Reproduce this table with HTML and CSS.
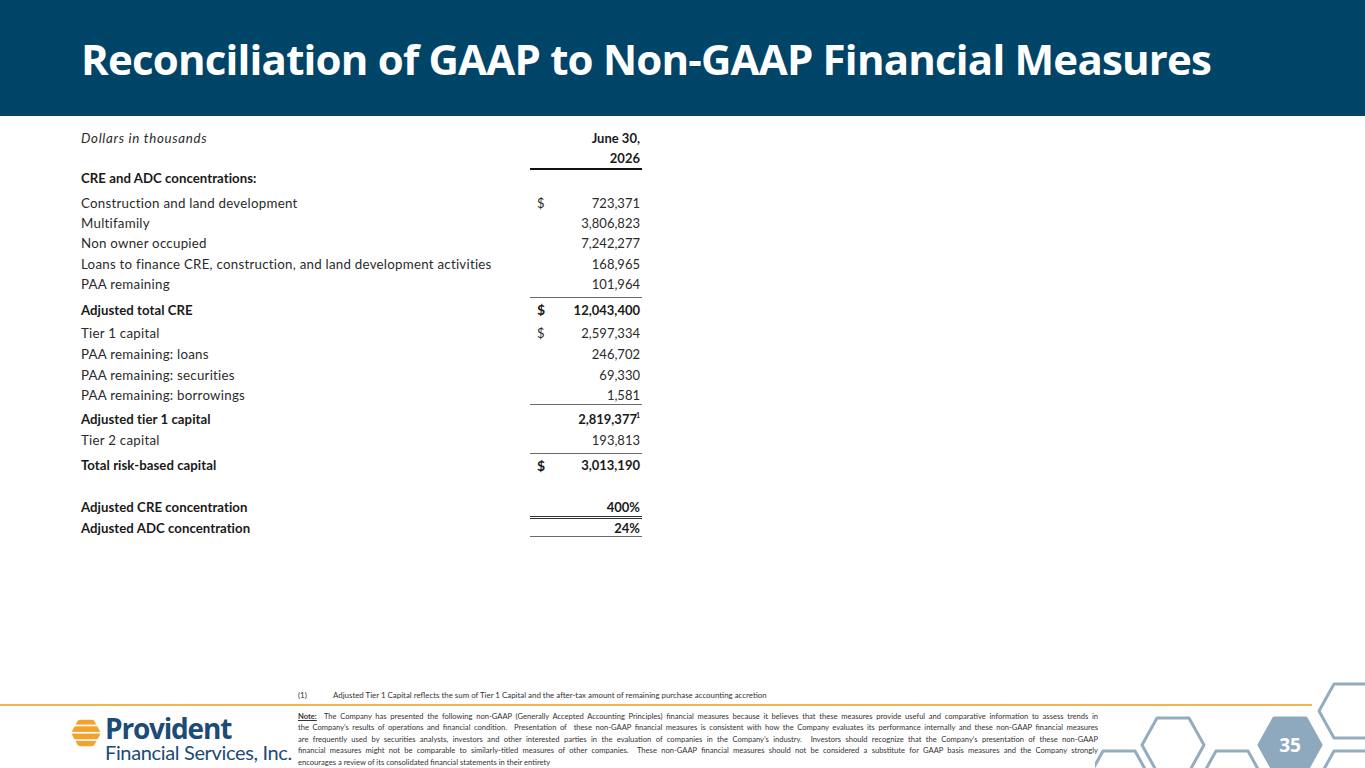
FILE: index.html
```html
<!DOCTYPE html>
<html lang="en">
<head>
<meta charset="utf-8">
<title>Reconciliation of GAAP to Non-GAAP Financial Measures</title>
<link rel="stylesheet" href="styles.css">
</head>
<body>
<div class="slide">
  <header class="banner">
    <h1 class="title">Reconciliation of GAAP to Non-GAAP Financial Measures</h1>
  </header>

  <section class="fin-table">
    <div class="row r-head">
      <div class="label italic">Dollars in thousands</div>
      <div class="amt bold"><span></span><span>June 30,</span></div>
    </div>
    <div class="row r-year">
      <div class="label"></div>
      <div class="amt bold"><span></span><span>2026</span></div>
    </div>
    <div class="row r-section">
      <div class="label bold">CRE and ADC concentrations:</div>
      <div class="amt"></div>
    </div>
    <div class="row r-std">
      <div class="label">Construction and land development</div>
      <div class="amt"><span>$</span><span>723,371</span></div>
    </div>
    <div class="row r-std">
      <div class="label">Multifamily</div>
      <div class="amt"><span></span><span>3,806,823</span></div>
    </div>
    <div class="row r-std">
      <div class="label">Non owner occupied</div>
      <div class="amt"><span></span><span>7,242,277</span></div>
    </div>
    <div class="row r-std r-21">
      <div class="label">Loans to finance CRE, construction, and land development activities</div>
      <div class="amt"><span></span><span>168,965</span></div>
    </div>
    <div class="row r-std">
      <div class="label">PAA remaining</div>
      <div class="amt"><span></span><span>101,964</span></div>
    </div>
    <div class="row r-total line-top">
      <div class="label bold">Adjusted total CRE</div>
      <div class="amt bold"><span class="cur-b">$</span><span>12,043,400</span></div>
    </div>
    <div class="row r-after-total">
      <div class="label">Tier 1 capital</div>
      <div class="amt"><span>$</span><span>2,597,334</span></div>
    </div>
    <div class="row r-std r-21">
      <div class="label">PAA remaining: loans</div>
      <div class="amt"><span></span><span>246,702</span></div>
    </div>
    <div class="row r-std r-22">
      <div class="label">PAA remaining: securities</div>
      <div class="amt"><span></span><span>69,330</span></div>
    </div>
    <div class="row r-std r-18">
      <div class="label">PAA remaining: borrowings</div>
      <div class="amt"><span></span><span>1,581</span></div>
    </div>
    <div class="row r-sub line-top">
      <div class="label bold">Adjusted tier 1 capital</div>
      <div class="amt bold"><span></span><span class="sup-wrap">2,819,377<sup>1</sup></span></div>
    </div>
    <div class="row r-tier2">
      <div class="label">Tier 2 capital</div>
      <div class="amt"><span></span><span>193,813</span></div>
    </div>
    <div class="row r-total2 line-top">
      <div class="label bold">Total risk-based capital</div>
      <div class="amt bold"><span class="cur-b">$</span><span>3,013,190</span></div>
    </div>
    <div class="spacer"></div>
    <div class="row r-cre line-double">
      <div class="label bold">Adjusted CRE concentration</div>
      <div class="amt bold"><span></span><span>400%</span></div>
    </div>
    <div class="row r-adc line-bottom">
      <div class="label bold">Adjusted ADC concentration</div>
      <div class="amt bold"><span></span><span>24%</span></div>
    </div>
  </section>

  <footer class="footer">
    <div class="footnote"><span class="fn-num">(1)</span><span>Adjusted Tier 1 Capital reflects the sum of Tier 1 Capital and the after-tax amount of remaining purchase accounting accretion</span></div>
    <div class="rule"></div>
    <div class="footer-bottom">
      <div class="logo">
        <svg class="logo-mark" width="32" height="28" viewBox="0 0 32 28" aria-hidden="true">
          <defs>
            <clipPath id="hexclip">
              <path d="M1 14 L7.5 2.2 Q8.5 0.8 10 0.8 L22 0.8 Q23.5 0.8 24.5 2.2 L31 14 L24.5 25.8 Q23.5 27.2 22 27.2 L10 27.2 Q8.5 27.2 7.5 25.8 Z"/>
            </clipPath>
          </defs>
          <g clip-path="url(#hexclip)" fill="#f5a22c">
            <rect x="0" y="0" width="32" height="5.6"/>
            <rect x="0" y="7.3" width="32" height="5.6"/>
            <rect x="0" y="14.6" width="32" height="5.6"/>
            <rect x="0" y="21.9" width="32" height="6.1"/>
          </g>
        </svg>
        <div class="logo-text">
          <div class="logo-name">Provident</div>
          <div class="logo-sub">Financial Services, Inc.</div>
        </div>
      </div>
      <div class="note">
        <span class="nl"><u class="note-lbl">Note:</u>&nbsp; The Company has presented the following non-GAAP (Generally Accepted Accounting Principles) financial measures because it believes that these measures provide useful and comparative information to assess trends in</span>
        <span class="nl">the Company’s results of operations and financial condition.&nbsp; Presentation of&nbsp; these non-GAAP financial measures is consistent with how the Company evaluates its performance internally and these non-GAAP financial measures</span>
        <span class="nl">are frequently used by securities analysts, investors and other interested parties in the evaluation of companies in the Company’s industry.&nbsp; Investors should recognize that the Company’s presentation of these non-GAAP</span>
        <span class="nl">financial measures might not be comparable to similarly-titled measures of other companies.&nbsp; These non-GAAP financial measures should not be considered a substitute for GAAP basis measures and the Company strongly</span>
        <span class="nl last">encourages a review of its consolidated financial statements in their entirety</span>
      </div>
    </div>
  </footer>

  <svg class="hexes" width="270" height="90" viewBox="1100 678 270 90" aria-hidden="true">
    <g fill="none" stroke="#93adbf" stroke-width="3" stroke-linejoin="round">
      <polygon points="1093,778 1108,751 1140,751 1155,778 1140,805 1108,805"/>
      <polygon points="1147,745 1162,718 1194,718 1209,745 1194,772 1162,772"/>
      <polygon points="1206,778 1221,751 1253,751 1268,778 1253,805 1221,805"/>
      <polygon points="1324,711 1339,684 1371,684 1386,711 1371,738 1339,738"/>
      <polygon points="1324,778 1339,751 1371,751 1386,778 1371,805 1339,805"/>
    </g>
    <polygon points="1264,745 1279,718 1311,718 1326,745 1311,772 1279,772" fill="#8ea9bd" stroke="#8ea9bd" stroke-width="3" stroke-linejoin="round"/>
    <text x="1295" y="752" text-anchor="middle" class="page-num">35</text>
  </svg>
</div>
</body>
</html>
```

FILE: styles.css
```css
* { box-sizing: border-box; }

html, body {
  margin: 0;
  padding: 0;
  background: #ffffff;
}

body {
  font-family: "Lato", "Open Sans", sans-serif;
  color: #2b2b2b;
}

.slide {
  position: relative;
  width: 1365px;
  height: 768px;
  overflow: hidden;
  display: flex;
  flex-direction: column;
  background: #ffffff;
}

/* ---------- Banner ---------- */
.banner {
  height: 116px;
  background: #004468;
  display: flex;
  align-items: center;
  padding-left: 81px;
  padding-top: 2px;
  flex: 0 0 auto;
}

.title {
  margin: 0;
  color: #ffffff;
  font-family: "Open Sans", sans-serif;
  font-weight: 700;
  font-size: 42px;
  letter-spacing: -0.8px;
  line-height: 1;
}

/* ---------- Table ---------- */
.fin-table {
  margin: 11px 0 0 81px;
  width: 561px;
  font-size: 13.3px;
  letter-spacing: 0.25px;
}

.row {
  display: flex;
  height: 20px;
}

.label {
  flex: 0 0 449px;
  display: flex;
  align-items: center;
  white-space: nowrap;
}

.amt {
  flex: 1 1 auto;
  display: flex;
  align-items: center;
  justify-content: space-between;
  padding: 0 2px 0 7px;
  white-space: nowrap;
  font-size: 13px;
  letter-spacing: 0;
}

.italic { font-style: italic; letter-spacing: 0.7px; }
.bold { font-weight: 700; color: #1a1a1a; }
.label.bold { font-size: 13.2px; letter-spacing: 0.05px; }

.cur-b { font-size: 14px; }

.r-head { height: 21px; }

.r-year { height: 22px; }
.r-year .amt { border-bottom: 2px solid #111111; }

.r-section { height: 23px; padding-bottom: 7px; }

.r-std { height: 20px; }
.r-21 { height: 21px; }
.r-22 { height: 22px; }
.r-18 { height: 18px; }

.line-top .label { border-top: 1px solid transparent; }
.line-top .amt { border-top: 1px solid #6b6b6b; }

.r-total { height: 24px; margin-top: 3px; }
.r-after-total { height: 22px; padding-top: 2px; }

.r-sub { height: 26px; }
.r-sub > .label,
.r-sub > .amt { padding-top: 3px; }
.r-sub .sup-wrap { position: relative; }
.r-sub sup {
  font-size: 7px;
  position: absolute;
  right: -3px;
  top: 0;
}
.r-sub .amt { padding-right: 5px; }

.r-tier2 { height: 23px; padding-bottom: 3px; }

.r-total2 { height: 23px; }

.spacer { height: 21px; }

.r-cre { height: 22px; }
.line-double .label { border-bottom: 3px solid transparent; }
.line-double .amt { border-bottom: 3px double #333333; }

.r-adc { height: 18px; }
.line-bottom .label { border-bottom: 1px solid transparent; }
.line-bottom .amt { border-bottom: 1px solid #6b6b6b; }

/* ---------- Footer ---------- */
.footer {
  margin-top: auto;
  height: 85px;
  display: flex;
  flex-direction: column;
  flex: 0 0 auto;
}

.footnote {
  height: 21px;
  padding: 4px 0 0 298px;
  font-size: 7.9px;
  color: #333333;
  display: flex;
  align-items: center;
}

.fn-num { width: 35px; }

.rule {
  width: 1312px;
  height: 2px;
  background: #f3b64d;
}

.footer-bottom {
  display: flex;
  flex: 1 1 auto;
}

.logo {
  width: 298px;
  padding: 8px 0 0 70px;
  display: flex;
  align-items: flex-start;
  gap: 3px;
}

.logo-mark { margin-top: 5px; flex: 0 0 auto; }

.logo-text {
  color: #1b4b76;
  display: flex;
  flex-direction: column;
}

.logo-name {
  font-family: "Open Sans", sans-serif;
  font-weight: 700;
  font-size: 28px;
  letter-spacing: -1.2px;
  line-height: 28px;
}

.logo-sub {
  font-family: "Lato", sans-serif;
  font-size: 20px;
  letter-spacing: -0.35px;
  line-height: 20px;
}

.note {
  width: 800px;
  padding-top: 5px;
  font-size: 7.6px;
  line-height: 11.4px;
  color: #333333;
}

.nl {
  display: block;
  white-space: nowrap;
  text-align: justify;
  text-align-last: justify;
}

.nl.last { text-align-last: left; }

.note-lbl { font-weight: 700; }

/* ---------- Decorative hexagons ---------- */
.hexes {
  position: absolute;
  right: 0;
  bottom: 0;
}

.page-num {
  font-family: "Open Sans", sans-serif;
  font-weight: 700;
  font-size: 19px;
  fill: #ffffff;
}
```
